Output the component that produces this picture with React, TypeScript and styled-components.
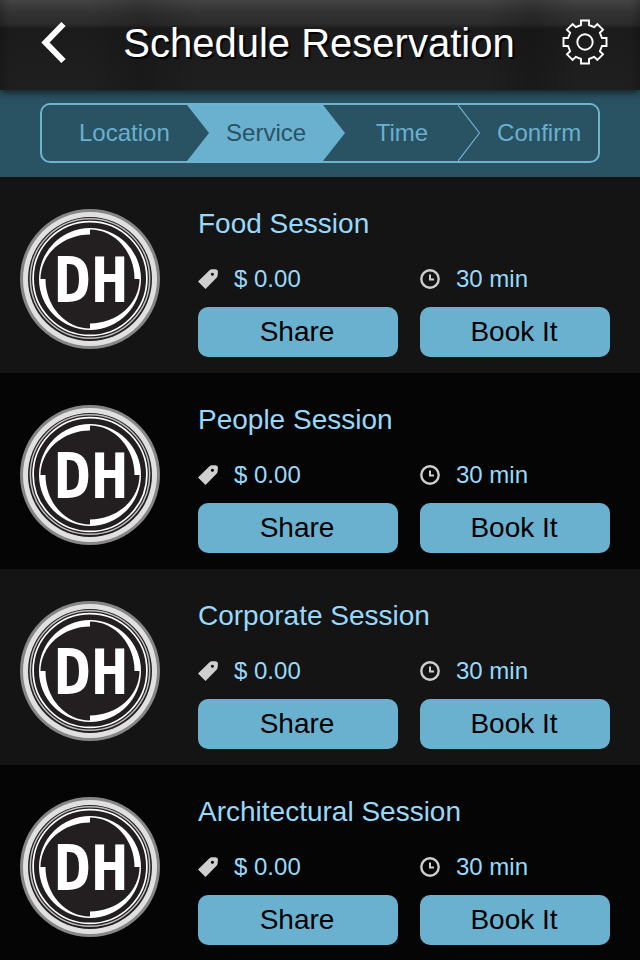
import React from "react";
import styled, { createGlobalStyle } from "styled-components";

const color = {
  accent: "#6ab0cf",
  deep: "#295263",
  outline: "#6fb3cf",
  text: "#98d9fb",
  icon: "#cfcfcf",
};

const GlobalStyle = createGlobalStyle`
  *, *::before, *::after { box-sizing: border-box; }
  body {
    margin: 0;
    background: #050505;
    font-family: "Liberation Sans", Arial, sans-serif;
    scrollbar-width: none;
  }
  button {
    font: inherit;
    border: 0;
    padding: 0;
    margin: 0;
    cursor: pointer;
  }
  svg { display: block; }
`;

const Header = styled.header`
  display: flex;
  align-items: center;
  justify-content: space-between;
  height: 90px;
  padding: 0 30px 6px 38px;
  position: relative;
  background:
    linear-gradient(90deg, rgba(0, 0, 0, 0.2) 0, transparent 10px, transparent calc(100% - 10px), rgba(0, 0, 0, 0.2) 100%),
    linear-gradient(90deg, transparent 14%, rgba(0, 0, 0, 0.16) 22%, transparent 31%, transparent 76%, rgba(0, 0, 0, 0.18) 83%, transparent 90%),
    linear-gradient(180deg, #444 0, #333 12px, #2b2b2b 24px, #1b1b1b 29px, #1f1f1f 100%);
  box-shadow: 0 2px 8px rgba(0, 0, 0, 0.7);
`;

const Title = styled.h1`
  margin: 0;
  padding: 2px 0 0 8px;
  font-size: 40px;
  line-height: 48px;
  font-weight: 400;
  color: #fff;
  text-shadow: 2px 2px 1px #000;
  white-space: nowrap;
`;

const IconButton = styled.button`
  display: grid;
  place-items: center;
  background: none;
  color: #fff;
`;

const Progress = styled.nav`
  padding: 13px 40px 14px;
  background: ${color.deep};
`;

const Steps = styled.div`
  display: flex;
  height: 60px;
  border: 2px solid ${color.outline};
  border-radius: 10px;
  overflow: hidden;
`;

const Step = styled.button<{ $grow: number; $active?: boolean; $first?: boolean }>`
  flex: ${(p) => p.$grow} 1 0;
  min-width: 0;
  padding-left: ${(p) => (p.$first ? "20px" : "0")};
  font-size: 24px;
  line-height: 28px;
  color: ${(p) => (p.$active ? color.deep : color.accent)};
  background: ${(p) => (p.$active ? color.accent : "transparent")};
`;

const List = styled.ul`
  list-style: none;
  margin: 0;
  padding: 0;
`;

const Row = styled.li`
  display: flex;
  align-items: flex-start;
  gap: 38px;
  padding: 32px 30px 16px 20px;
  background: #141414;

  &:nth-child(even) {
    background: #050505;
  }
`;

const Details = styled.div`
  flex: 1;
  min-width: 0;
  display: grid;
  grid-template-columns: 20fr 19fr;
  column-gap: 22px;
`;

const Name = styled.h2`
  grid-column: 1 / -1;
  margin: 0 0 26px;
  font-size: 28px;
  line-height: 30px;
  font-weight: 400;
  color: ${color.text};
`;

const Meta = styled.div`
  display: flex;
  align-items: center;
  gap: 16px;
  margin-bottom: 14px;
  font-size: 24px;
  line-height: 28px;
  color: ${color.text};
`;

const Action = styled.button`
  height: 50px;
  padding-right: 2px;
  border-radius: 10px;
  background: ${color.accent};
  color: #000;
  font-size: 28px;
  line-height: 32px;
`;

const LogoSvg = styled.svg`
  flex: none;
`;

const LogoText = styled.text`
  font-family: "DejaVu Sans Mono", monospace;
  font-weight: 700;
  font-size: 62px;
  text-anchor: middle;
  fill: #fff;
`;

const BackIcon = () => (
  <svg width="32" height="44" viewBox="0 0 32 44" aria-hidden="true">
    <path d="M25.5 4 L7.5 22.5 L25.5 41" fill="none" stroke="currentColor" strokeWidth="6" />
  </svg>
);

const toothAngles = [0, 45, 90, 135, 180, 225, 270, 315];

const gearPath = (() => {
  const at = (radius: number, half: number, deg: number) => {
    const a = (deg * Math.PI) / 180;
    const x = 25 + radius * Math.sin(a) + half * Math.cos(a);
    const y = 25 - radius * Math.cos(a) + half * Math.sin(a);
    return `${x.toFixed(2)} ${y.toFixed(2)}`;
  };
  const points = toothAngles.flatMap((deg) => [
    at(17, -4, deg),
    at(21.5, -4, deg),
    at(21.5, 4, deg),
    at(17, 4, deg),
  ]);
  return `M${points.join(" L")} Z`;
})();

const GearIcon = () => (
  <svg width="50" height="50" viewBox="0 0 50 50" fill="none" stroke="currentColor" strokeWidth="1.9" aria-hidden="true">
    <path d={gearPath} />
    <circle cx="25" cy="25" r="7.7" />
  </svg>
);

const TagIcon = () => (
  <svg width="20" height="20" viewBox="0 0 20 20" aria-hidden="true">
    <path
      fill={color.icon}
      fillRule="evenodd"
      d="M0 12.5 L11.5 1.2 Q12.6 0.2 14 0.2 L17.5 0.2 Q20 0.4 20 2.8 L19.6 6.5 Q19.4 8 18.3 9 L7.5 20 Z M14.4 3.7 a1.6 1.6 0 1 0 0.01 0 Z"
    />
  </svg>
);

const ClockIcon = () => (
  <svg width="20" height="20" viewBox="0 0 20 20" fill="none" stroke={color.icon} aria-hidden="true">
    <circle cx="10" cy="10" r="8.7" strokeWidth="2.4" />
    <path d="M10 5.5 V10.5 H14" strokeWidth="2" />
  </svg>
);

type ArrowKind = "intoActive" | "outOfActive" | "plain";

const Arrow = ({ kind }: { kind: ArrowKind }) => (
  <svg width="22" height="56" viewBox="0 0 22 56" aria-hidden="true">
    {kind === "intoActive" && <rect width="22" height="56" fill={color.accent} />}
    {kind === "plain" ? (
      <path d="M0 0 L21.5 28 L0 56" fill="none" stroke={color.outline} strokeWidth="1.2" />
    ) : (
      <path d="M0 0 L22 28 L0 56 Z" fill={kind === "intoActive" ? color.deep : color.accent} />
    )}
  </svg>
);

const Logo = () => (
  <LogoSvg width="140" height="140" viewBox="0 0 140 140" role="img" aria-label="DH">
    <circle cx="70" cy="70" r="70" fill="#868686" />
    <circle cx="70" cy="70" r="67" fill="#e0e0e0" />
    <circle cx="70" cy="70" r="62" fill="#231f20" />
    <circle cx="70" cy="69.5" r="59.7" fill="none" stroke="#bdbdbd" strokeWidth="1.5" />
    <circle cx="70" cy="69.5" r="56.9" fill="none" stroke="#fff" strokeWidth="1.7" />
    <g fill="#fff">
      <path d="M70 19 A51 51 0 0 0 19 70 L20.5 70 A49.5 44.5 0 0 1 70 25.5 Z" />
      <path d="M121 70 A51 51 0 0 0 70 19 L70 20.5 A44.5 49.5 0 0 1 114.5 70 Z" />
      <path d="M70 121 A51 51 0 0 0 121 70 L119.5 70 A49.5 44.5 0 0 1 70 114.5 Z" />
      <path d="M19 70 A51 51 0 0 0 70 121 L70 119.5 A44.5 49.5 0 0 1 25.5 70 Z" />
    </g>
    <LogoText x="71" y="93">DH</LogoText>
  </LogoSvg>
);

const services = [
  { name: "Food Session", price: "$ 0.00", duration: "30 min" },
  { name: "People Session", price: "$ 0.00", duration: "30 min" },
  { name: "Corporate Session", price: "$ 0.00", duration: "30 min" },
  { name: "Architectural Session", price: "$ 0.00", duration: "30 min" },
];

export default function App() {
  return (
    <>
      <GlobalStyle />
      <Header>
        <IconButton type="button" aria-label="Back">
          <BackIcon />
        </IconButton>
        <Title>Schedule Reservation</Title>
        <IconButton type="button" aria-label="Settings">
          <GearIcon />
        </IconButton>
      </Header>
      <Progress aria-label="Booking steps">
        <Steps>
          <Step type="button" $grow={125} $first>Location</Step>
          <Arrow kind="intoActive" />
          <Step type="button" $grow={115} $active aria-current="step">Service</Step>
          <Arrow kind="outOfActive" />
          <Step type="button" $grow={113}>Time</Step>
          <Arrow kind="plain" />
          <Step type="button" $grow={118}>Confirm</Step>
        </Steps>
      </Progress>
      <main>
        <List>
          {services.map((service) => (
            <Row key={service.name}>
              <Logo />
              <Details>
                <Name>{service.name}</Name>
                <Meta>
                  <TagIcon />
                  {service.price}
                </Meta>
                <Meta>
                  <ClockIcon />
                  {service.duration}
                </Meta>
                <Action type="button">Share</Action>
                <Action type="button">Book It</Action>
              </Details>
            </Row>
          ))}
        </List>
      </main>
    </>
  );
}
